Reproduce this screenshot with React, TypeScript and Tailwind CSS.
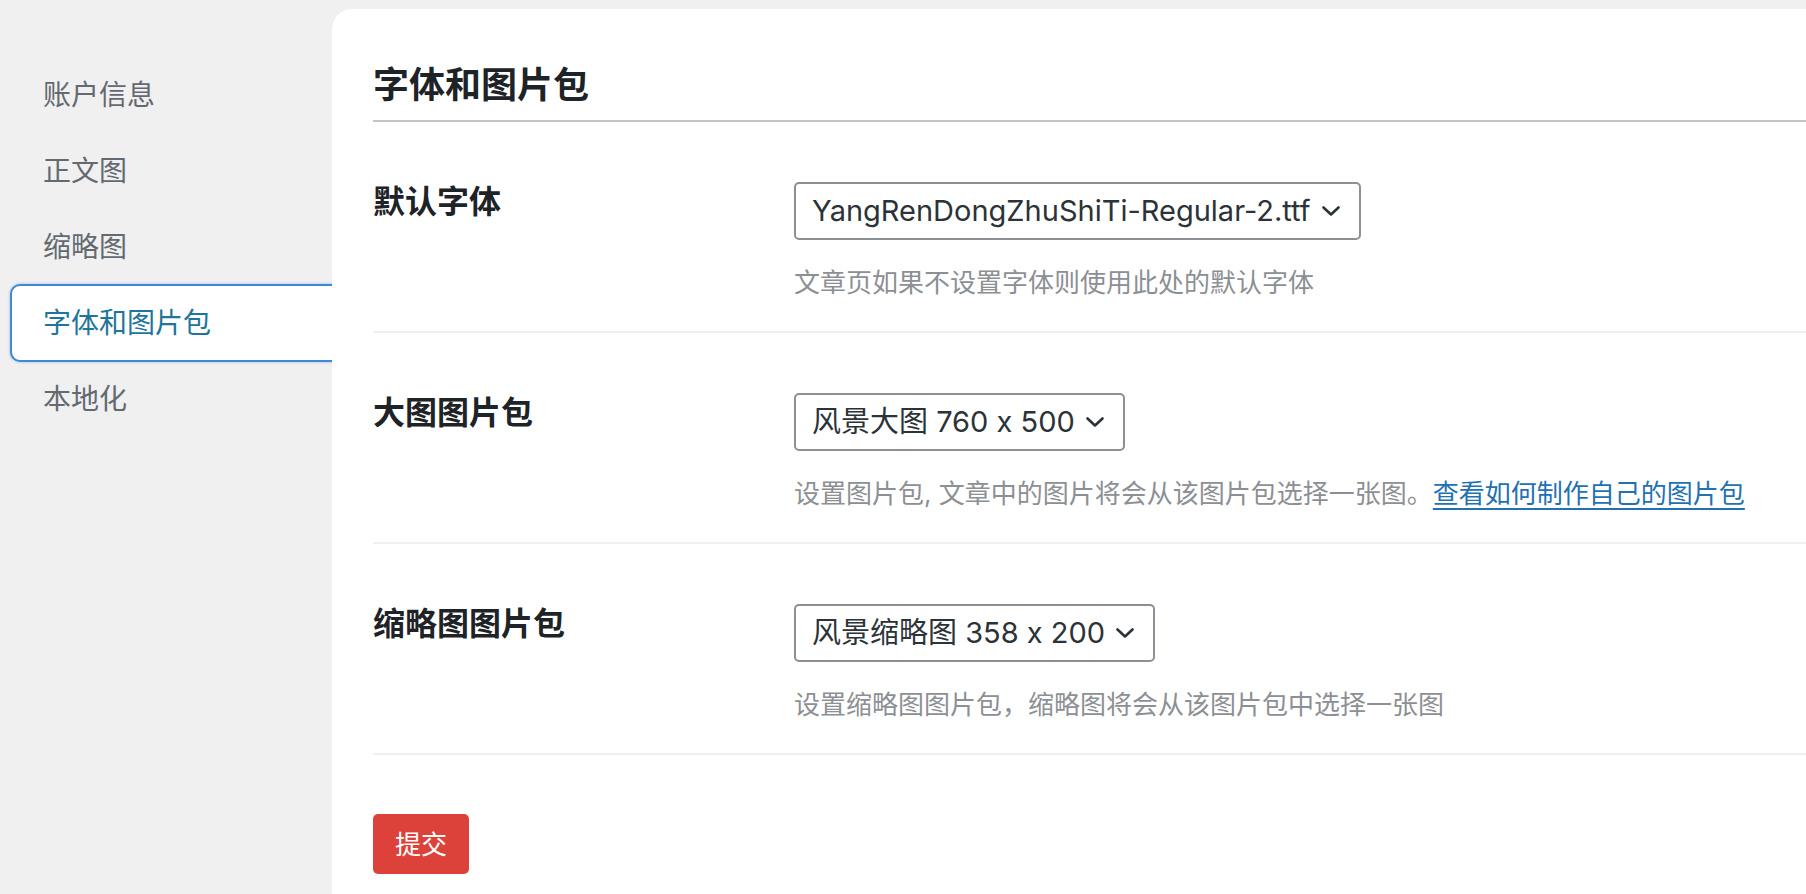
import type { ReactNode } from 'react'

const FONT = { fontFamily: 'Inter, "Noto Sans CJK SC", sans-serif' }

const NAV = ['账户信息', '正文图', '缩略图', '字体和图片包', '本地化']
const ACTIVE = '字体和图片包'

function Chevron() {
  return (
    <svg width="20" height="12" viewBox="0 0 20 12" fill="none" className="shrink-0">
      <path d="M2.5 2.5 L10 9.5 L17.5 2.5" stroke="#2c3338" strokeWidth="2.6" strokeLinecap="round" strokeLinejoin="round" />
    </svg>
  )
}

function FakeSelect({ value }: { value: string }) {
  return (
    <div className="inline-flex h-[58px] items-center gap-[10px] rounded-[5px] border-2 border-[#8c8f94] bg-white pl-[16px] pr-[18px] text-[29px] text-[#2c3338]">
      <span className="whitespace-nowrap">{value}</span>
      <Chevron />
    </div>
  )
}

function Row({ label, value, children }: { label: string; value: string; children: ReactNode }) {
  return (
    <div className="grid grid-cols-[421px_1fr] border-b-2 border-[#f0f0f1] pt-[60px] pb-[30px]">
      <div className="pt-[2px] text-[32px] leading-[36px] font-bold text-[#1d2327]">{label}</div>
      <div>
        <FakeSelect value={value} />
        <p className="mt-[25px] text-[26px] leading-[36px] text-[#8c8f94] whitespace-nowrap">{children}</p>
      </div>
    </div>
  )
}

export default function App() {
  return (
    <div className="flex h-[894px] overflow-hidden bg-[#f0f0f1]" style={FONT}>
      <aside className="w-[332px] shrink-0 pt-[57px]">
        {NAV.map((item) =>
          item === ACTIVE ? (
            <div
              key={item}
              className="ml-[10px] -mr-[24px] flex h-[78px] -my-px items-center rounded-[10px] border-2 border-[#4189d4] bg-white pl-[31px] text-[28px] text-[#21759b] shadow-[0_0_3px_rgba(65,137,212,0.55)]"
            >
              {item}
            </div>
          ) : (
            <div key={item} className="ml-[10px] flex h-[76px] items-center pl-[33px] text-[28px] text-[#646970]">
              {item}
            </div>
          )
        )}
      </aside>

      <main className="relative z-10 mt-[9px] flex-1 rounded-tl-[20px] bg-white pl-[41px] pt-[54px]">
        <h2 className="border-b-2 border-[#c3c4c7] pb-[13px] text-[36px] leading-[44px] font-bold text-[#1d2327]">
          字体和图片包
        </h2>

        <Row label="默认字体" value="YangRenDongZhuShiTi-Regular-2.ttf">
          文章页如果不设置字体则使用此处的默认字体
        </Row>

        <Row label="大图图片包" value="风景大图 760 x 500">
          设置图片包, 文章中的图片将会从该图片包选择一张图。
          <a href="#" className="text-[#2271b1] underline decoration-2 underline-offset-[5px]">
            查看如何制作自己的图片包
          </a>
        </Row>

        <Row label="缩略图图片包" value="风景缩略图 358 x 200">
          设置缩略图图片包，缩略图将会从该图片包中选择一张图
        </Row>

        <button className="mt-[59px] flex h-[60px] w-[96px] items-center justify-center rounded-[5px] bg-[#dd423a] text-[26px] text-white">
          提交
        </button>
      </main>
    </div>
  )
}
